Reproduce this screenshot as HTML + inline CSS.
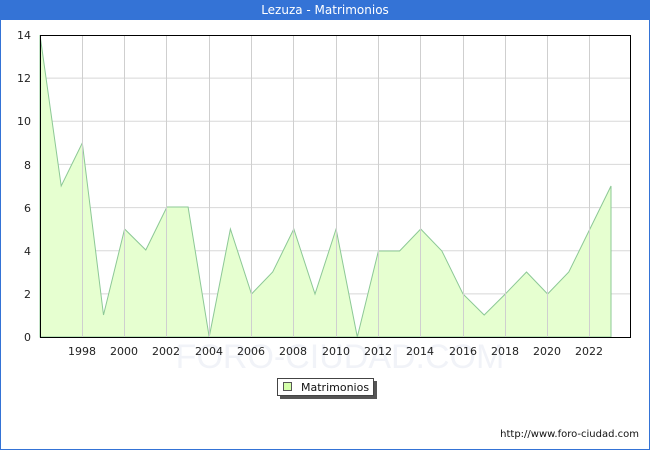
<!DOCTYPE html>
<html><head><style>
body{margin:0;width:650px;height:450px;overflow:hidden;background:#fff;font-family:"DejaVu Sans","Liberation Sans",sans-serif}
.frame{position:absolute;left:0;top:0;width:648px;height:448px;border:1px solid #3473D6}
.hdr{position:absolute;left:0;top:0;width:650px;height:20px;background:#3473D6;color:#fff;font-size:12px;text-align:center;line-height:21px}
</style></head><body>
<div class="frame"></div>
<div class="hdr">Lezuza - Matrimonios</div>
<svg width="650" height="450" style="position:absolute;left:0;top:0" font-family="DejaVu Sans, Liberation Sans, sans-serif" font-size="11">
<text x="340" y="368" font-size="34" fill="#f1f3f8" text-anchor="middle" font-family="Liberation Sans">FORO-CIUDAD.COM</text>
<g stroke="#d8d8d8" stroke-width="1">
<line x1="40" y1="293.9" x2="631" y2="293.9"/><line x1="40" y1="250.7" x2="631" y2="250.7"/>
<line x1="40" y1="207.6" x2="631" y2="207.6"/><line x1="40" y1="164.4" x2="631" y2="164.4"/>
<line x1="40" y1="121.3" x2="631" y2="121.3"/><line x1="40" y1="78.1" x2="631" y2="78.1"/>
</g>
<polygon fill="#e6ffd0" stroke="#8cc896" stroke-width="1" points="40,337 40,35 61.2,186 82.3,143 103.5,315 124.6,229 145.8,250 166.9,207 188.1,207 209.2,337 230.4,229 251.5,294 272.7,272 293.8,229 315,294 336.1,229 357.3,337 378.4,251 399.6,251 420.7,229 441.9,251 463,294 484.2,315 505.3,294 526.5,272 547.6,294 568.8,272 589.9,229 611,186 611,337"/>
<g stroke="#cfcfcf" stroke-width="1">
<line x1="82.5" y1="35" x2="82.5" y2="337"/><line x1="124.5" y1="35" x2="124.5" y2="337"/>
<line x1="166.5" y1="35" x2="166.5" y2="337"/><line x1="209.5" y1="35" x2="209.5" y2="337"/>
<line x1="251.5" y1="35" x2="251.5" y2="337"/><line x1="293.5" y1="35" x2="293.5" y2="337"/>
<line x1="336.5" y1="35" x2="336.5" y2="337"/><line x1="378.5" y1="35" x2="378.5" y2="337"/>
<line x1="420.5" y1="35" x2="420.5" y2="337"/><line x1="463.5" y1="35" x2="463.5" y2="337"/>
<line x1="505.5" y1="35" x2="505.5" y2="337"/><line x1="547.5" y1="35" x2="547.5" y2="337"/>
<line x1="589.5" y1="35" x2="589.5" y2="337"/>
</g>
<rect x="40.5" y="35.5" width="590" height="302" fill="none" stroke="#000"/>
<g text-anchor="end" fill="#222">
<text x="31" y="341">0</text><text x="31" y="298">2</text><text x="31" y="255">4</text><text x="31" y="212">6</text><text x="31" y="169">8</text><text x="31" y="125">10</text><text x="31" y="82">12</text><text x="31" y="39">14</text>
</g>
<g text-anchor="middle" fill="#222">
<text x="82" y="355">1998</text><text x="124" y="355">2000</text><text x="166" y="355">2002</text><text x="209" y="355">2004</text><text x="251" y="355">2006</text><text x="293" y="355">2008</text><text x="336" y="355">2010</text><text x="378" y="355">2012</text><text x="420" y="355">2014</text><text x="463" y="355">2016</text><text x="505" y="355">2018</text><text x="547" y="355">2020</text><text x="589" y="355">2022</text>
</g>
<rect x="280" y="381" width="97" height="18" fill="#555"/>
<rect x="277.5" y="378.5" width="96" height="17" fill="#fff" stroke="#444"/>
<rect x="283.5" y="382.5" width="8" height="8" fill="#d4ffaa" stroke="#555"/>
<text x="301" y="391" fill="#111">Matrimonios</text>
<text x="639" y="437" text-anchor="end" font-size="10" fill="#111">http://www.foro-ciudad.com</text>
</svg>
</body></html>
